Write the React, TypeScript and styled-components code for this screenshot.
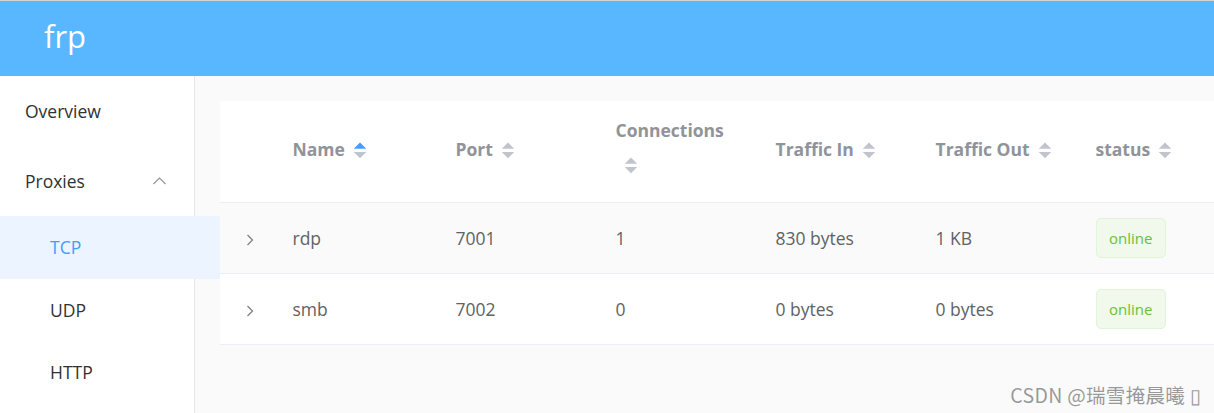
import React from 'react'
import styled, { createGlobalStyle } from 'styled-components'

const GlobalStyle = createGlobalStyle`
  html, body {
    margin: 0;
    padding: 0;
    overflow: hidden;
    font-family: "Open Sans", "Noto Sans CJK SC", sans-serif;
  }
`

const Page = styled.div`
  display: flex;
  flex-direction: column;
  height: 100vh;
  position: relative;
`

const TopBar = styled.header`
  height: 75px;
  flex-shrink: 0;
  background: #58b7ff;
  border-top: 1px solid #d3d3d3;
  display: flex;
  align-items: center;
  padding-left: 44px;
`

const Logo = styled.div`
  color: #fff;
  font-size: 31px;
  line-height: 1;
  margin-top: -4px;
`

const Main = styled.div`
  display: flex;
  flex: 1;
  min-height: 0;
`

const Sidebar = styled.nav`
  width: 194px;
  flex-shrink: 0;
  background: #fff;
  border-right: 1px solid #e6e6e6;
`

const MenuItem = styled.div<{ $sub?: boolean; $active?: boolean }>`
  height: ${p => (p.$sub ? '62.5px' : '70px')};
  width: ${p => (p.$active ? '220px' : 'auto')};
  position: relative;
  z-index: 1;
  display: flex;
  align-items: center;
  justify-content: space-between;
  padding: 0 28px 0 ${p => (p.$sub ? '50px' : '25px')};
  box-sizing: border-box;
  font-size: 17.5px;
  color: ${p => (p.$active ? '#409eff' : '#303133')};
  background: ${p => (p.$active ? '#ecf5ff' : 'transparent')};
`

const Content = styled.main`
  flex: 1;
  background: #fafafa;
  padding: 25px 0 0 25px;
  overflow: hidden;
`

const Table = styled.table`
  width: 1023px;
  table-layout: fixed;
  border-collapse: collapse;
  background: #fff;
`

const HeadCell = styled.th`
  padding: 15px 0;
  text-align: left;
  vertical-align: middle;
  font-weight: 700;
  font-size: 17.5px;
  color: #909399;
  border-bottom: 1px solid #ebeef5;
`

const Row = styled.tr<{ $shade?: boolean }>`
  background: ${p => (p.$shade ? '#fafafa' : '#fff')};
`

const BodyCell = styled.td`
  padding: 15px 0;
  vertical-align: middle;
  font-size: 17.5px;
  color: #606266;
  border-bottom: 1px solid #ebeef5;
`

const Cell = styled.div<{ $center?: boolean }>`
  padding: 0 12.5px;
  line-height: 28.75px;
  white-space: nowrap;
  text-align: ${p => (p.$center ? 'center' : 'left')};
`

const Caret = styled.svg<{ $block?: boolean }>`
  display: ${p => (p.$block ? 'block' : 'inline-block')};
  vertical-align: middle;
`

const Tag = styled.span`
  display: inline-block;
  height: 40px;
  line-height: 38px;
  padding: 0 12.5px;
  box-sizing: border-box;
  font-size: 15px;
  color: #67c23a;
  background: #f0f9eb;
  border: 1px solid #e1f3d8;
  border-radius: 5px;
`

const Watermark = styled.div`
  position: absolute;
  right: 13px;
  bottom: 9px;
  font-family: "Noto Sans CJK SC", sans-serif;
  font-size: 19.5px;
  line-height: 1;
  color: rgba(120, 120, 120, 0.75);
  letter-spacing: 0.3px;
`

const SortCaret = ({ active, block }: { active?: boolean; block?: boolean }) => (
  <Caret $block={block} width="30" height="42.5" viewBox="0 0 30 42.5">
    <polygon points="8.75,18.75 21.25,18.75 15,12.5" fill={active ? '#409eff' : '#c0c4cc'} />
    <polygon points="8.75,22 21.25,22 15,28.25" fill="#c0c4cc" />
  </Caret>
)

const Chevron = ({ dir, color }: { dir: 'up' | 'right'; color: string }) =>
  dir === 'up' ? (
    <svg width="13" height="8" viewBox="0 0 13 8">
      <polyline points="0.5,7 6.5,1 12.5,7" fill="none" stroke={color} strokeWidth="1.1" />
    </svg>
  ) : (
    <svg width="8" height="12" viewBox="0 0 8 12" style={{ verticalAlign: 'middle' }}>
      <polyline points="1.5,1 6.5,6 1.5,11" fill="none" stroke={color} strokeWidth="1.2" />
    </svg>
  )

const columns = [
  { title: 'Name', width: 163, active: true },
  { title: 'Port', width: 160 },
  { title: 'Connections', width: 160, wrap: true },
  { title: 'Traffic In', width: 160 },
  { title: 'Traffic Out', width: 160 },
  { title: 'status', width: 160 },
]

const proxies = [
  { name: 'rdp', port: 7001, conns: 1, trafficIn: '830 bytes', trafficOut: '1 KB' },
  { name: 'smb', port: 7002, conns: 0, trafficIn: '0 bytes', trafficOut: '0 bytes' },
]

const App = () => {
  return (
    <Page>
      <GlobalStyle />
      <TopBar>
        <Logo>frp</Logo>
      </TopBar>
      <Main>
        <Sidebar>
          <MenuItem>Overview</MenuItem>
          <MenuItem>
            Proxies
            <Chevron dir="up" color="#909399" />
          </MenuItem>
          <MenuItem $sub $active>TCP</MenuItem>
          <MenuItem $sub>UDP</MenuItem>
          <MenuItem $sub>HTTP</MenuItem>
        </Sidebar>
        <Content>
          <Table>
            <colgroup>
              <col style={{ width: 60 }} />
              {columns.map(c => (
                <col key={c.title} style={{ width: c.width }} />
              ))}
            </colgroup>
            <thead>
              <tr>
                <HeadCell />
                {columns.map(c => (
                  <HeadCell key={c.title}>
                    <Cell>
                      {c.title}
                      <SortCaret active={c.active} block={c.wrap} />
                    </Cell>
                  </HeadCell>
                ))}
              </tr>
            </thead>
            <tbody>
              {proxies.map((p, i) => (
                <Row key={p.name} $shade={i === 0}>
                  <BodyCell>
                    <Cell $center>
                      <Chevron dir="right" color="#7a7d85" />
                    </Cell>
                  </BodyCell>
                  <BodyCell><Cell>{p.name}</Cell></BodyCell>
                  <BodyCell><Cell>{p.port}</Cell></BodyCell>
                  <BodyCell><Cell>{p.conns}</Cell></BodyCell>
                  <BodyCell><Cell>{p.trafficIn}</Cell></BodyCell>
                  <BodyCell><Cell>{p.trafficOut}</Cell></BodyCell>
                  <BodyCell>
                    <Cell><Tag>online</Tag></Cell>
                  </BodyCell>
                </Row>
              ))}
            </tbody>
          </Table>
        </Content>
      </Main>
      <Watermark>CSDN @瑞雪掩晨曦 ▯</Watermark>
    </Page>
  )
}

export default App
